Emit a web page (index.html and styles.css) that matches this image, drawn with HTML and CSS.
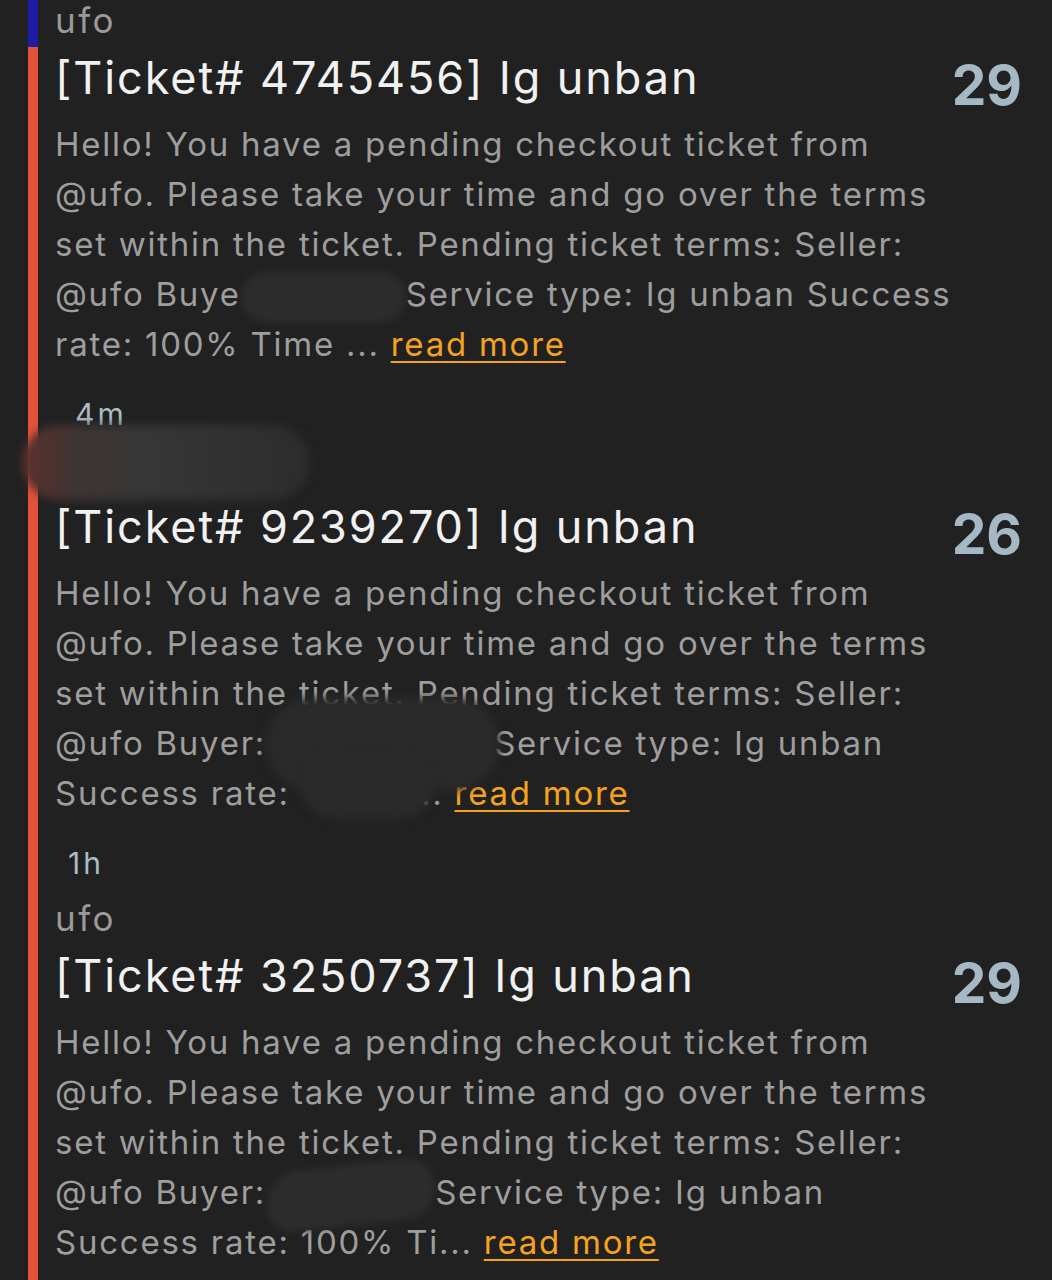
FILE: index.html
```html
<!DOCTYPE html>
<html lang="en">
<head>
  <meta charset="UTF-8">
  <meta name="viewport" content="width=device-width, initial-scale=1.0">
  <title>Tickets</title>
  <link rel="stylesheet" href="styles.css">
</head>
<body>
  <div class="thread">
    <div class="ticket">
      <div class="author">ufo</div>
      <div class="title-row">
        <h2 class="title">[Ticket# 4745456] Ig unban</h2>
        <span class="count">29</span>
      </div>
      <p class="preview">Hello! You have a pending checkout ticket from<br>@ufo. Please take your time and go over the terms<br>set within the ticket. Pending ticket terms: Seller:<br>@ufo Buye<span class="redact r1"></span>Service type: Ig unban Success<br>rate: 100% Time ... <a class="more" href="#">read more</a></p>
      <div class="time">4m</div>
    </div>

    <div class="ticket">
      <div class="author">ufo</div>
      <div class="blob blob-author"></div>
      <div class="title-row">
        <h2 class="title">[Ticket# 9239270] Ig unban</h2>
        <span class="count">26</span>
      </div>
      <p class="preview">Hello! You have a pending checkout ticket from<br>@ufo. Please take your time and go over the terms<br>set within the ticket. Pending ticket terms: Seller:<br>@ufo Buyer:<span class="gap g1"></span>Service type: Ig unban<br>Success rate: <span class="gap g2"></span>... <a class="more" href="#">read more</a></p>
      <div class="blob blob-body"></div>
      <div class="blob blob-body-low"></div>
      <div class="time time-short">1h</div>
    </div>

    <div class="ticket">
      <div class="author">ufo</div>
      <div class="title-row">
        <h2 class="title">[Ticket# 3250737] Ig unban</h2>
        <span class="count">29</span>
      </div>
      <p class="preview">Hello! You have a pending checkout ticket from<br>@ufo. Please take your time and go over the terms<br>set within the ticket. Pending ticket terms: Seller:<br>@ufo Buyer:<span class="redact r3"></span>Service type: Ig unban<br>Success rate: 100% Ti... <a class="more" href="#">read more</a></p>
    </div>
  </div>
</body>
</html>
```

FILE: styles.css
```css
body {
  margin: 0;
  background: #212121;
  font-family: Inter, "Noto Sans", sans-serif;
  height: 1280px;
  overflow: hidden;
}
.thread {
  margin-left: 28px;
  border-left: 10px solid #e5523a;
  min-height: 1277px;
  position: relative;
}
.thread::before {
  content: '';
  position: absolute;
  left: -10px;
  top: 0;
  width: 10px;
  height: 47px;
  background: #1c1ca6;
}
.ticket {
  position: relative;
  padding: 0 30px 15px 17px;
}
.author {
  color: #9a9a9a;
  font-size: 35px;
  letter-spacing: 2.5px;
  line-height: 40px;
}
.title-row {
  display: flex;
  justify-content: space-between;
  align-items: center;
  margin-top: 10px;
  height: 56px;
}
.title {
  margin: 0;
  color: #f1f1f1;
  font-size: 45px;
  font-weight: 400;
  letter-spacing: 1.9px;
  line-height: 56px;
}
.count {
  color: #a4b9c3;
  font-size: 55px;
  font-weight: 700;
  margin-top: 14px;
}
.preview {
  margin: 13px 0 0 0;
  color: #9e9e9e;
  font-size: 33px;
  letter-spacing: 1.75px;
  line-height: 50px;
}
.more {
  color: #f5a21f;
  text-decoration: underline;
  text-decoration-thickness: 2px;
  text-underline-offset: 5px;
}
.time {
  margin-top: 25px;
  padding-left: 20px;
  color: #a8bcc5;
  font-size: 30px;
  letter-spacing: 3px;
  line-height: 40px;
}
.time-short {
  padding-left: 13px;
}
.redact {
  display: inline-block;
  vertical-align: middle;
  margin: -10px 0;
  background: #2c2c2c;
  filter: blur(3px);
}
.r1 {
  width: 165px;
  height: 52px;
  border-radius: 26px;
}
.r3 {
  width: 169px;
  height: 60px;
  border-radius: 40px 30px 34px 26px;
  transform: rotate(-6deg);
}
.gap {
  display: inline-block;
  vertical-align: middle;
}
.g1 { width: 228px; }
.g2 { width: 109px; }
.blob {
  position: absolute;
  filter: blur(4px);
}
.blob-author {
  top: -24px;
  left: -16px;
  width: 288px;
  height: 75px;
  border-radius: 38px;
  background: linear-gradient(90deg, #5c302c 0%, #3f3434 18%, #363636 45%, #2c2c2c 100%);
}
.blob-body {
  top: 249px;
  left: 227px;
  width: 235px;
  height: 92px;
  border-radius: 46px;
  background: #2a2a2a;
}
.blob-body-low {
  top: 300px;
  left: 262px;
  width: 135px;
  height: 70px;
  border-radius: 35px;
  background: #2a2a2a;
}
```
